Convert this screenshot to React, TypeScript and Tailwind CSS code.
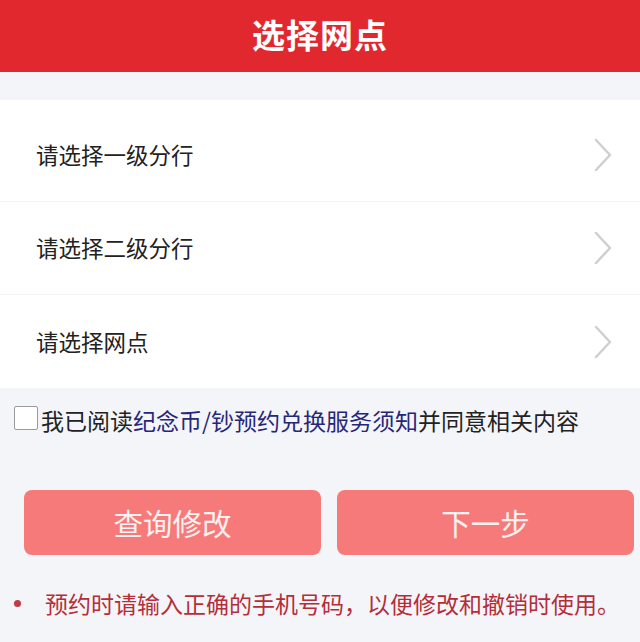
const font = { fontFamily: '"Noto Sans CJK SC", "Noto Sans", sans-serif' }

const rows = ['请选择一级分行', '请选择二级分行', '请选择网点']

function Chevron() {
  return (
    <svg width="20" height="34" viewBox="0 0 20 34" className="shrink-0">
      <path d="M3 2 L17 17 L3 32" fill="none" stroke="#cfcfcf" strokeWidth="2.5" strokeLinecap="round" strokeLinejoin="round" />
    </svg>
  )
}

export default function App() {
  return (
    <div className="w-[640px] h-[642px] overflow-hidden bg-[#f4f5f9]" style={font}>
      <header className="h-[72px] bg-[#e2282f] flex items-center justify-center">
        <h1 className="text-white text-[33px] font-bold tracking-[1px] -mt-[2px]">选择网点</h1>
      </header>

      <div className="h-[28px]" />

      <div className="bg-white pt-[9px]">
        {rows.map((r, i) => (
          <div
            key={r}
            className={`h-[93px] flex items-center justify-between pl-[36px] pr-[27px] ${
              i < rows.length - 1 ? 'border-b border-[#f3f3f5]' : ''
            }`}
          >
            <span className="text-[22.5px] text-[#222]">{r}</span>
            <Chevron />
          </div>
        ))}
      </div>

      <div className="flex items-center pl-[14px] pt-[21px]">
        <span className="w-[24px] h-[24px] border border-[#9a9a9a] bg-white rounded-[2px] shrink-0 -mt-[6px]" />
        <p className="ml-[3px] text-[23px] text-[#222] leading-none whitespace-nowrap">
          我已阅读<span className="text-[#27277a]">纪念币/钞预约兑换服务须知</span>并同意相关内容
        </p>
      </div>

      <div className="flex gap-[16px] px-[24px] mt-[58px] pr-[6px]">
        <button className="w-[297px] h-[65px] rounded-[8px] bg-[#f77a7a] text-[29.5px] text-white/90">查询修改</button>
        <button className="w-[297px] h-[65px] rounded-[8px] bg-[#f77a7a] text-[29.5px] text-white/90">下一步</button>
      </div>

      <div className="flex items-center mt-[31px] pl-[14px]">
        <span className="w-[7px] h-[7px] rounded-full bg-[#c23a45]" />
        <p className="ml-[24px] text-[23px] text-[#b42e3a] whitespace-nowrap">
          预约时请输入正确的手机号码，以便修改和撤销时使用。
        </p>
      </div>
    </div>
  )
}
